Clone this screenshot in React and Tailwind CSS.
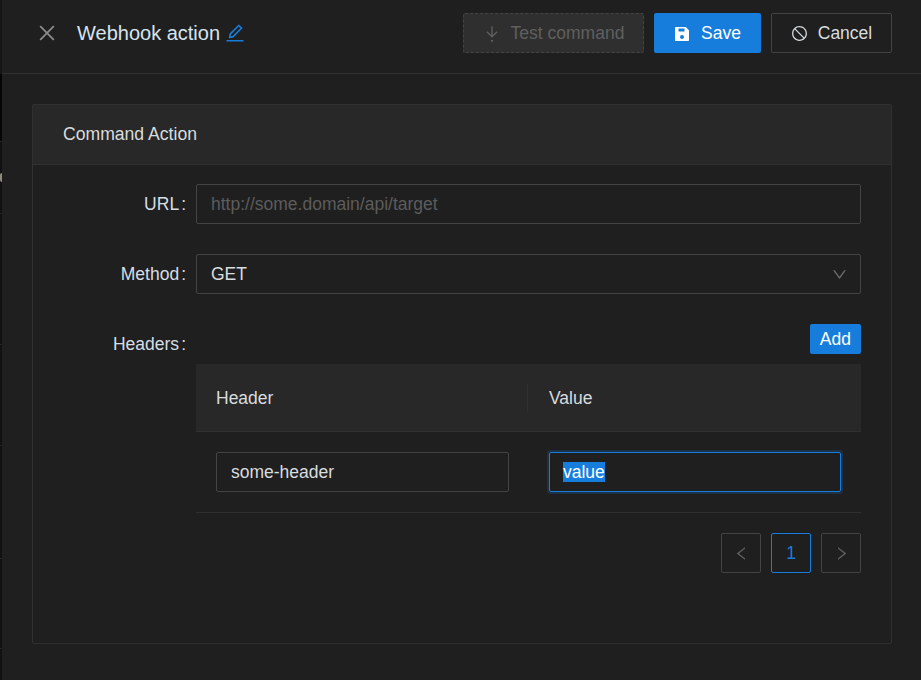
import { AiOutlineClose, AiOutlineEdit, AiOutlineStop, AiOutlineDown, AiOutlineLeft, AiOutlineRight } from 'react-icons/ai';

const TestIcon = () => (
  <svg viewBox="0 0 16 16" className="w-[18px] h-[18px]" fill="none" stroke="currentColor" strokeWidth="1.2">
    <path d="M8 1v9.5M3.5 6 8 10.5 12.5 6" />
    <circle cx="8" cy="14" r="1" fill="currentColor" stroke="none" />
  </svg>
);

// floppy disk: solid body, slot along the top, dot low in the middle
const SaveIcon = () => (
  <svg viewBox="0 0 16 16" className="w-[16px] h-[16px]" fill="currentColor">
    <path
      fillRule="evenodd"
      d="M2 1h9.3c.3 0 .5.1.7.3l2.7 2.7c.2.2.3.4.3.7V14c0 .6-.4 1-1 1H2c-.6 0-1-.4-1-1V2c0-.6.4-1 1-1zm2.5 1.5v3h6v-3h-6zM8 9a2 2 0 1 0 0 4 2 2 0 0 0 0-4z"
    />
  </svg>
);

const Label = ({ children }) => (
  <div className="w-[163px] shrink-0 h-10 flex items-center justify-end text-[#d5dee4]">
    {children}
    <span className="ml-[2px] mr-[10px]">:</span>
  </div>
);

const App = () => {
  return (
    <div className="flex w-[921px] h-[680px] overflow-hidden bg-[#1f1f1f] text-[17.5px] text-[#d9dcdf] font-['Liberation_Sans',Arial,sans-serif]">
      {/* Sliver of the page behind the drawer */}
      <div className="w-[2px] shrink-0 bg-[#111111] flex flex-col">
        <div className="h-[74px] bg-[#161616]" />
        <div className="h-[67px] bg-[#050505]" />
        <div className="h-[72px] border-t border-[#262626] pt-[31px]">
          <div className="h-[9px] bg-[#8f8a7e] rounded-l-full" />
        </div>
        <div className="h-[131px] border-t border-[#262626]" />
        <div className="h-[101px] border-t border-[#262626]" />
        <div className="h-[113px] border-t border-[#262626]" />
        <div className="h-[90px] border-t border-[#262626]" />
        <div className="flex-1 border-t border-[#262626]" />
      </div>

      <div className="flex-1 min-w-0">
        <header className="h-[74px] pb-[8px] flex items-center border-b border-[#303030] pl-[34px] pr-[29px]">
          <AiOutlineClose className="w-[22px] h-[22px] text-[#8c8c8c]" />
          <h1 className="ml-[19px] text-[20px] font-normal text-[#d6e4f0]">Webhook action</h1>
          <AiOutlineEdit className="ml-[4px] w-[22px] h-[22px] text-[#177ddc]" />

          <button className="ml-auto h-10 w-[181px] pt-[2px] flex items-center justify-center gap-[10px] rounded-[2px] border border-dashed border-[#434343] bg-[#2f2f2f] text-[#5f5f5f]">
            <TestIcon />
            Test command
          </button>
          <button className="ml-[10px] h-10 w-[107px] pt-[2px] flex items-center justify-center gap-[11px] rounded-[2px] bg-[#177ddc] text-white">
            <SaveIcon />
            Save
          </button>
          <button className="ml-[10px] h-10 w-[121px] pt-[2px] flex items-center justify-center gap-[10px] rounded-[2px] border border-[#434343] text-[#d9dcdf]">
            <AiOutlineStop className="w-[17px] h-[17px]" />
            Cancel
          </button>
        </header>

        <main className="pt-[30px] pl-[30px] pr-[29px]">
          <section className="h-[540px] border border-[#303030] rounded-[2px]">
            <div className="h-[60px] flex items-center px-[30px] bg-[#282828] border-b border-[#303030] text-[17.6px]">
              Command Action
            </div>

            <div className="pt-[19px] pr-[30px] flex flex-col gap-[30px]">
              <div className="flex">
                <Label>URL</Label>
                <input
                  readOnly
                  placeholder="http://some.domain/api/target"
                  className="flex-1 min-w-0 h-10 px-[14px] rounded-[2px] border border-[#434343] bg-transparent outline-none placeholder:text-[#5c5c5c]"
                />
              </div>

              <div className="flex">
                <Label>Method</Label>
                <div className="flex-1 h-10 pl-[14px] pr-[12px] flex items-center justify-between rounded-[2px] border border-[#434343]">
                  GET
                  <AiOutlineDown className="w-[17px] h-[17px] text-[#6a6a6a]" />
                </div>
              </div>

              <div className="flex">
                <Label>Headers</Label>
                <div className="flex-1 min-w-0">
                  <div className="flex justify-end">
                    <button className="h-[30px] px-[10px] rounded-[2px] bg-[#177ddc] text-white">Add</button>
                  </div>

                  <div className="mt-[10px] h-[68px] flex items-center pt-[1px] bg-[#282828] border-b border-[#303030]">
                    <div className="w-[332px] h-7 flex items-center pl-5 border-r border-[#303030]">Header</div>
                    <div className="pl-[21px]">Value</div>
                  </div>

                  <div className="h-[81px] flex items-center gap-10 px-5 border-b border-[#303030]">
                    <input
                      readOnly
                      value="some-header"
                      className="w-[293px] h-10 px-[14px] rounded-[2px] border border-[#434343] bg-transparent outline-none"
                    />
                    <div className="w-[292px] h-10 px-[13px] flex items-center rounded-[2px] border border-[#177ddc] shadow-[0_0_0_2px_rgba(23,125,220,0.2)]">
                      <span className="bg-[#177ddc] text-white leading-[20px]">value</span>
                    </div>
                  </div>

                  <div className="mt-5 flex justify-end gap-[10px]">
                    <div className="w-10 h-10 flex items-center justify-center rounded-[2px] border border-[#434343] text-[#5f5f5f]">
                      <AiOutlineLeft className="w-[17px] h-[17px]" />
                    </div>
                    <div className="w-10 h-10 flex items-center justify-center rounded-[2px] border border-[#177ddc] text-[#177ddc]">1</div>
                    <div className="w-10 h-10 flex items-center justify-center rounded-[2px] border border-[#434343] text-[#5f5f5f]">
                      <AiOutlineRight className="w-[17px] h-[17px]" />
                    </div>
                  </div>
                </div>
              </div>
            </div>
          </section>
        </main>
      </div>
    </div>
  );
};

export default App;
